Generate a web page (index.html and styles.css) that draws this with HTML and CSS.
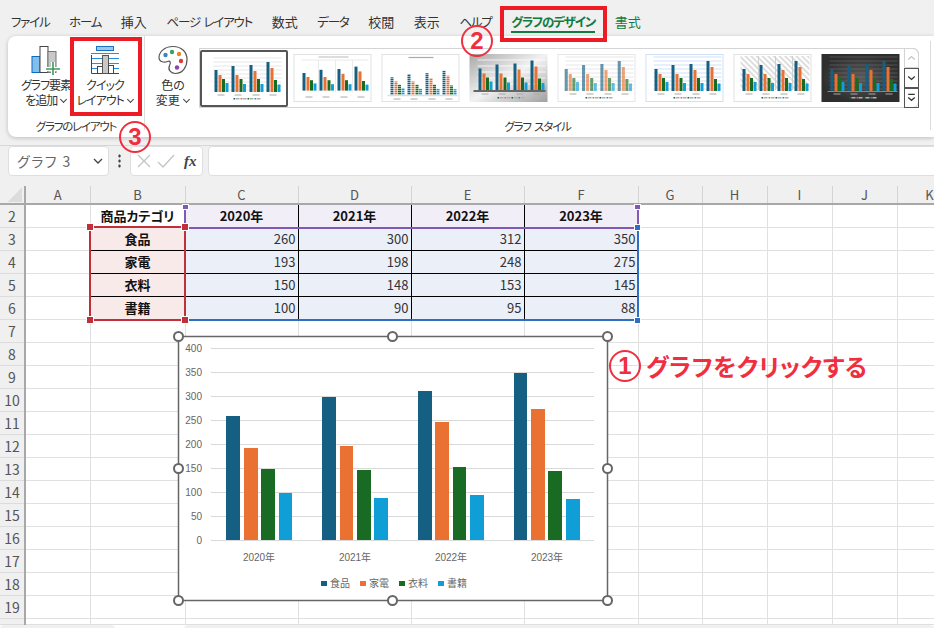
FILE: index.html
```html
<!DOCTYPE html>
<html lang="ja">
<head>
    <meta charset="UTF-8">
    <title>グラフのデザイン</title>
    <link rel="stylesheet" href="styles.css">
</head>
<body>
    <!-- shared parts of the little gallery charts -->
    <svg class="defs">
        <defs>
            <g id="mini-grid">
                <path d="M8 3H76M8 7H76M8 11H76M8 15H76M8 19H76M8 23H76M8 27H76M8 31H76M8 35H76" stroke="#dcdcdc" stroke-width="0.7"/>
            </g>
            <g id="mini-bars">
                <g fill="#156082">
                    <rect x="9" y="15" width="3" height="22"/><rect x="26" y="11" width="3" height="26"/>
                    <rect x="44" y="10" width="3" height="27"/><rect x="61" y="7" width="3" height="30"/>
                </g>
                <g fill="#e97132">
                    <rect x="13" y="20" width="3" height="17"/><rect x="30" y="20" width="3" height="17"/>
                    <rect x="48" y="16" width="3" height="21"/><rect x="65" y="13" width="3" height="24"/>
                </g>
                <g fill="#196b24">
                    <rect x="16.500" y="24" width="3" height="13"/><rect x="34" y="24" width="3" height="13"/>
                    <rect x="51.500" y="24" width="3" height="13"/><rect x="68.500" y="25" width="3" height="12"/>
                </g>
                <g fill="#0f9ed5">
                    <rect x="20" y="28" width="3" height="9"/><rect x="37.500" y="29" width="3" height="8"/>
                    <rect x="55" y="29" width="3" height="8"/><rect x="72" y="29.500" width="3" height="7.500"/>
                </g>
            </g>
            <g id="mini-foot">
                <path d="M12 40H19M29 40H36M47 40H54M64 40H71" stroke="#a8a8a8" stroke-width="1"/>
                <rect x="28" y="43" width="1.500" height="1.500" fill="#156082"/><rect x="30" y="43" width="4" height="1.500" fill="#b0b0b0"/>
                <rect x="35" y="43" width="1.500" height="1.500" fill="#e97132"/><rect x="37" y="43" width="4" height="1.500" fill="#b0b0b0"/>
                <rect x="42" y="43" width="1.500" height="1.500" fill="#196b24"/><rect x="44" y="43" width="4" height="1.500" fill="#b0b0b0"/>
                <rect x="49" y="43" width="1.500" height="1.500" fill="#0f9ed5"/><rect x="51" y="43" width="4" height="1.500" fill="#b0b0b0"/>
            </g>
            <pattern id="stripes" width="4" height="2" patternUnits="userSpaceOnUse">
                <rect width="4" height="1" fill="#fff" fill-opacity="0.55"/>
            </pattern>
            <pattern id="hatch" width="4" height="4" patternUnits="userSpaceOnUse" patternTransform="rotate(45)">
                <rect width="4" height="2" fill="#dedede"/>
            </pattern>
            <linearGradient id="silver" x1="0" y1="0" x2="1" y2="1">
                <stop offset="0" stop-color="#a8a8a8"/><stop offset="0.5" stop-color="#f2f2f2"/><stop offset="1" stop-color="#a0a0a0"/>
            </linearGradient>
            <radialGradient id="coal">
                <stop offset="0" stop-color="#5a5a5a"/><stop offset="1" stop-color="#2e2e2e"/>
            </radialGradient>
        </defs>
    </svg>

    <nav class="tabs">
        <span class="tab kana">ファイル</span>
        <span class="tab kana">ホーム</span>
        <span class="tab">挿入</span>
        <span class="tab kana">ページ レイアウト</span>
        <span class="tab">数式</span>
        <span class="tab kana">データ</span>
        <span class="tab">校閲</span>
        <span class="tab">表示</span>
        <span class="tab kana">ヘルプ</span>
        <span class="tab kana active">グラフのデザイン</span>
        <span class="tab context">書式</span>
    </nav>

    <section class="ribbon">
        <div class="group layout-group">
            <div class="group-body">
                <div class="big-btn add-btn">
                    <svg class="icon" viewBox="0 0 30 30">
                        <rect x="1" y="11.500" width="8" height="16" fill="#83beec" stroke="#0b6cbd"/>
                        <rect x="9" y="1.500" width="8" height="26" fill="#fff" stroke="#444"/>
                        <rect x="17" y="6.500" width="8" height="21" fill="#c8c8c8" stroke="#777"/>
                        <path d="M22 17V31M15 24H29" stroke="#fff" stroke-width="4"/>
                        <path d="M22 17V31M15 24H29" stroke="#3a9a5b" stroke-width="1.600"/>
                    </svg>
                    <span>グラフ要素<br>を追加 <i class="caret"></i></span>
                </div>
                <div class="big-btn quick-btn">
                    <svg class="icon" viewBox="0 0 30 30">
                        <rect x="6.500" y="1.500" width="17" height="4" fill="#9cc8ee" stroke="#1a73c2"/>
                        <path d="M1 8.500H29M1 13.500H29M1 18.500H29M1 23.500H29" stroke="#2a8fe0"/>
                        <path d="M1.500 10V28.500H29" fill="none" stroke="#444"/>
                        <rect x="7.500" y="21.500" width="5" height="7" fill="#fff" stroke="#444"/>
                        <rect x="12.500" y="10.500" width="6" height="18" fill="#c8c8c8" stroke="#555"/>
                        <rect x="18.500" y="20.500" width="5" height="8" fill="#fff" stroke="#444"/>
                    </svg>
                    <span>クイック<br>レイアウト <i class="caret"></i></span>
                </div>
            </div>
            <div class="group-label">グラフのレイアウト</div>
        </div>
        <div class="group style-group">
            <div class="group-body">
                <div class="big-btn color-btn">
                    <svg class="icon" viewBox="0 0 30 30">
                        <path d="M15 1.500C6 1.500 1 7.500 1 12.500C1 17.500 7 17.500 9.500 16.500C12.500 15.500 13 17.500 11.500 20.500C9.500 25 13 28.500 17.500 28.500C25 28.500 29 21.500 29 14.500C29 6.500 23 1.500 15 1.500Z" fill="#fff" stroke="#555" stroke-width="1.200"/>
                        <circle cx="7.500" cy="10" r="2.200" fill="#3b84c4"/>
                        <circle cx="14" cy="7" r="2.200" fill="#3aa35a"/>
                        <circle cx="21" cy="9" r="2.200" fill="#e8862a"/>
                        <circle cx="23" cy="16" r="2.200" fill="#e5383b"/>
                        <circle cx="19" cy="22.500" r="2.200" fill="#8e44ad"/>
                    </svg>
                    <span>色の<br>変更 <i class="caret"></i></span>
                </div>
                <div class="gallery">
                    <div class="thumb-selected">
                        <svg class="thumb" viewBox="0 0 78 48"><rect width="78" height="48" fill="#fff"/><use href="#mini-grid"/><use href="#mini-bars"/><use href="#mini-foot"/></svg>
                    </div>
                    <svg class="thumb" viewBox="0 0 78 48"><rect x="0.500" y="0.500" width="77" height="47" fill="#fff" stroke="#e2e2e2"/><path d="M8 6H75M25 6V38M42 6V38M59 6V38" stroke="#e4e4e4" stroke-width="0.800"/><path d="M25 3H55" stroke="#bbb" stroke-width="1"/><use href="#mini-bars" transform="translate(0 7) scale(1 0.8)"/><path d="M12 43H19M29 43H36M47 43H54M64 43H71" stroke="#a8a8a8"/></svg>
                    <svg class="thumb" viewBox="0 0 78 48"><rect x="0.500" y="0.500" width="77" height="47" fill="#fff" stroke="#e2e2e2"/><path d="M27 3.500H52" stroke="#aaa" stroke-width="1.200"/><use href="#mini-bars" transform="translate(0 11) scale(1 0.82)"/><rect x="8" y="8" width="68" height="33" fill="url(#stripes)"/><path d="M6 41.500H76" stroke="#ddd" stroke-width="1.500"/><path d="M12 45H19M29 45H36M47 45H54M64 45H71" stroke="#a8a8a8"/></svg>
                    <svg class="thumb" viewBox="0 0 78 48"><rect width="78" height="48" fill="url(#silver)"/><path d="M8 6H76M8 12H76M8 18H76M8 24H76M8 30H76" stroke="#fff" stroke-opacity="0.5" stroke-width="1.500"/><use href="#mini-bars" transform="translate(0 -0.500)"/><rect x="4" y="36" width="72" height="2" fill="#666"/><use href="#mini-foot"/></svg>
                    <svg class="thumb" viewBox="0 0 78 48"><rect x="0.500" y="0.500" width="77" height="47" fill="#fff" stroke="#e6e6e6"/><use href="#mini-grid"/><g transform="translate(-2 0) scale(1.020 1)"><use href="#mini-bars" opacity="0.650"/></g><use href="#mini-foot"/></svg>
                    <svg class="thumb" viewBox="0 0 78 48"><rect x="0.500" y="0.500" width="77" height="47" fill="#fff" stroke="#cfe2f5"/><path d="M8 3H76M8 7H76M8 11H76M8 15H76M8 19H76M8 23H76M8 27H76M8 31H76M8 35H76" stroke="#cfe2f5" stroke-width="1.200"/><use href="#mini-bars"/><use href="#mini-foot"/></svg>
                    <svg class="thumb" viewBox="0 0 78 48"><rect x="0.500" y="0.500" width="77" height="47" fill="#fff" stroke="#e2e2e2"/><rect x="7" y="2" width="69" height="34" fill="url(#hatch)"/><path d="M25 2V36M42 2V36M59 2V36" stroke="#d0d0d0"/><use href="#mini-bars"/><use href="#mini-foot"/></svg>
                    <svg class="thumb" viewBox="0 0 78 48"><rect width="78" height="48" fill="url(#coal)"/><path d="M8 3H76M8 7H76M8 11H76M8 15H76M8 19H76M8 23H76M8 27H76M8 31H76M8 35H76" stroke="#777" stroke-width="0.500"/><use href="#mini-bars"/><rect x="6" y="37" width="70" height="1" fill="#888"/><use href="#mini-foot"/></svg>
                    <div class="gallery-scroll">
                        <span class="scroll-btn off"><svg viewBox="0 0 14 19"><path d="M3.500 11L7 8L10.500 11" fill="none" stroke="#c4c4c4" stroke-width="1.400"/></svg></span>
                        <span class="scroll-btn"><svg viewBox="0 0 14 19"><path d="M3.500 8L7 11L10.500 8" fill="none" stroke="#333" stroke-width="1.400"/></svg></span>
                        <span class="scroll-btn"><svg viewBox="0 0 14 19"><path d="M3.500 5.500H10.500M3.500 9L7 12L10.500 9" fill="none" stroke="#333" stroke-width="1.400"/></svg></span>
                    </div>
                </div>
            </div>
            <div class="group-label">グラフ スタイル</div>
        </div>
    </section>

    <div class="formula-bar">
        <div class="name-box">グラフ 3<svg viewBox="0 0 10 6"><path d="M1 1L5 5L9 1" fill="none" stroke="#444" stroke-width="1.300"/></svg></div>
        <div class="bar-dots"></div>
        <div class="fx-box">
            <svg viewBox="0 0 40 16"><path d="M2 2L14 14M14 2L2 14M22 9L27 14L38 2" fill="none" stroke="#c4c4c4" stroke-width="1.300"/></svg>
            <em>fx</em>
        </div>
        <div class="formula-input"></div>
    </div>

    <div class="sheet">
        <table class="cells">
            <colgroup>
                <col class="c-row"><col class="c-a"><col class="c-b"><col class="c-n"><col class="c-n"><col class="c-n"><col class="c-f"><col class="c-g"><col class="c-h"><col class="c-h"><col class="c-h"><col class="c-k">
            </colgroup>
            <tr class="col-head"><th class="corner"></th><th>A</th><th>B</th><th>C</th><th>D</th><th>E</th><th>F</th><th>G</th><th>H</th><th>I</th><th>J</th><th>K</th></tr>
            <tr><th>2</th><td></td><td class="cat head">商品カテゴリ</td><td class="year">2020年</td><td class="year">2021年</td><td class="year">2022年</td><td class="year">2023年</td><td></td><td></td><td></td><td></td><td></td></tr>
            <tr><th>3</th><td></td><td class="cat">食品</td><td class="num">260</td><td class="num">300</td><td class="num">312</td><td class="num">350</td><td></td><td></td><td></td><td></td><td></td></tr>
            <tr><th>4</th><td></td><td class="cat">家電</td><td class="num">193</td><td class="num">198</td><td class="num">248</td><td class="num">275</td><td></td><td></td><td></td><td></td><td></td></tr>
            <tr><th>5</th><td></td><td class="cat">衣料</td><td class="num">150</td><td class="num">148</td><td class="num">153</td><td class="num">145</td><td></td><td></td><td></td><td></td><td></td></tr>
            <tr><th>6</th><td></td><td class="cat">書籍</td><td class="num">100</td><td class="num">90</td><td class="num">95</td><td class="num">88</td><td></td><td></td><td></td><td></td><td></td></tr>
            <tr><th>7</th><td></td><td></td><td></td><td></td><td></td><td></td><td></td><td></td><td></td><td></td><td></td></tr>
            <tr><th>8</th><td></td><td></td><td></td><td></td><td></td><td></td><td></td><td></td><td></td><td></td><td></td></tr>
            <tr><th>9</th><td></td><td></td><td></td><td></td><td></td><td></td><td></td><td></td><td></td><td></td><td></td></tr>
            <tr><th>10</th><td></td><td></td><td></td><td></td><td></td><td></td><td></td><td></td><td></td><td></td><td></td></tr>
            <tr><th>11</th><td></td><td></td><td></td><td></td><td></td><td></td><td></td><td></td><td></td><td></td><td></td></tr>
            <tr><th>12</th><td></td><td></td><td></td><td></td><td></td><td></td><td></td><td></td><td></td><td></td><td></td></tr>
            <tr><th>13</th><td></td><td></td><td></td><td></td><td></td><td></td><td></td><td></td><td></td><td></td><td></td></tr>
            <tr><th>14</th><td></td><td></td><td></td><td></td><td></td><td></td><td></td><td></td><td></td><td></td><td></td></tr>
            <tr><th>15</th><td></td><td></td><td></td><td></td><td></td><td></td><td></td><td></td><td></td><td></td><td></td></tr>
            <tr><th>16</th><td></td><td></td><td></td><td></td><td></td><td></td><td></td><td></td><td></td><td></td><td></td></tr>
            <tr><th>17</th><td></td><td></td><td></td><td></td><td></td><td></td><td></td><td></td><td></td><td></td><td></td></tr>
            <tr><th>18</th><td></td><td></td><td></td><td></td><td></td><td></td><td></td><td></td><td></td><td></td><td></td></tr>
            <tr><th>19</th><td></td><td></td><td></td><td></td><td></td><td></td><td></td><td></td><td></td><td></td><td></td></tr>
            <tr class="sliver"><th></th><td></td><td></td><td></td><td></td><td></td><td></td><td></td><td></td><td></td><td></td><td></td></tr>
        </table>

        <!-- data range highlights -->
        <div class="range range-year"><i class="grip g-tr"></i><i class="grip g-tl"></i></div>
        <div class="range range-val"><i class="grip g-tr"></i><i class="grip g-br"></i></div>
        <div class="range range-cat"><i class="grip g-tl"></i><i class="grip g-tr"></i><i class="grip g-bl"></i><i class="grip g-br"></i></div>

        <!-- chart, viewBox uses page coordinates -->
        <svg class="chart" viewBox="170 328 448 282">
            <rect class="chart-frame" x="178.500" y="336.500" width="429" height="264"/>
            <path class="gridline" d="M211 348.500H594M211 372.500H594M211 396.500H594M211 420.500H594M211 444.500H594M211 468.500H594M211 492.500H594M211 516.500H594M211 540.500H594"/>
            <g class="axis-y">
                <text x="202" y="352">400</text><text x="202" y="376">350</text><text x="202" y="400">300</text>
                <text x="202" y="424">250</text><text x="202" y="448">200</text><text x="202" y="472">150</text>
                <text x="202" y="496">100</text><text x="202" y="520">50</text><text x="202" y="544">0</text>
            </g>
            <g class="s-food">
                <rect x="226" y="416" width="14" height="124"/><rect x="322" y="397" width="14" height="143"/>
                <rect x="418" y="391" width="14" height="149"/><rect x="514" y="373" width="13" height="167"/>
            </g>
            <g class="s-elec">
                <rect x="244" y="448" width="14" height="92"/><rect x="340" y="446" width="13" height="94"/>
                <rect x="435" y="422" width="14" height="118"/><rect x="531" y="409" width="14" height="131"/>
            </g>
            <g class="s-wear">
                <rect x="261" y="469" width="14" height="71"/><rect x="357" y="470" width="14" height="70"/>
                <rect x="453" y="467" width="13" height="73"/><rect x="548" y="471" width="14" height="69"/>
            </g>
            <g class="s-book">
                <rect x="279" y="493" width="13" height="47"/><rect x="374" y="498" width="14" height="42"/>
                <rect x="470" y="495" width="14" height="45"/><rect x="566" y="499" width="14" height="41"/>
            </g>
            <g class="axis-x">
                <text x="259" y="561">2020年</text><text x="355" y="561">2021年</text>
                <text x="451" y="561">2022年</text><text x="547" y="561">2023年</text>
            </g>
            <rect class="s-food" x="321" y="581" width="6" height="5"/><text class="legend" x="330" y="587">食品</text>
            <rect class="s-elec" x="360" y="581" width="6" height="5"/><text class="legend" x="369" y="587">家電</text>
            <rect class="s-wear" x="399" y="581" width="6" height="5"/><text class="legend" x="408" y="587">衣料</text>
            <rect class="s-book" x="438" y="581" width="6" height="5"/><text class="legend" x="447" y="587">書籍</text>
            <g class="chart-grip">
                <circle cx="178.500" cy="336.500" r="4.500"/><circle cx="392.500" cy="336.500" r="4.500"/><circle cx="607.500" cy="336.500" r="4.500"/>
                <circle cx="178.500" cy="468.500" r="4.500"/><circle cx="607.500" cy="468.500" r="4.500"/>
                <circle cx="178.500" cy="600.500" r="4.500"/><circle cx="392.500" cy="600.500" r="4.500"/><circle cx="607.500" cy="600.500" r="4.500"/>
            </g>
        </svg>
    </div>

    <footer class="sheet-tabs"><span class="sheet-pill first"></span><span class="sheet-pill second"></span></footer>

    <!-- callouts drawn on top of the screenshot -->
    <div class="mark mark-tab"></div>
    <div class="mark mark-quick"></div>
    <div class="num-badge badge-2">2</div>
    <div class="num-badge badge-3">3</div>
    <div class="callout"><span class="num-badge">1</span><span>グラフをクリックする</span></div>
</body>
</html>
```

FILE: styles.css
```css
*{
    margin: 0;
    padding: 0;
    box-sizing: border-box;
}

body{
    position: relative;
    width: 934px;
    height: 628px;
    overflow: hidden;
    background-color: #f0f0f0;
    color: #333;
    font-family: "Noto Sans CJK JP", "Noto Sans", sans-serif;
    font-size: 12px;
    font-feature-settings: "palt";
}

.defs{
    position: absolute;
    width: 0;
    height: 0;
}

/* tabs */
.tabs{
    display: flex;
    gap: 19.600px;
    height: 36px;
    padding: 13px 0 0 11px;
    font-size: 13px;
    line-height: 18px;
}

.tab.kana{
    font-size: 12.500px;
    letter-spacing: -1.200px;
    word-spacing: 2px;
}

.tab.active{
    height: 20px;
    border-bottom: 2px solid #107c41;
    color: #107c41;
    font-weight: 700;
}

.tab.context{
    color: #107c41;
}

/* ribbon */
.ribbon{
    display: flex;
    height: 101px;
    margin-left: 8px;
    background-color: #fff;
    border-radius: 8px 0 0 8px;
    box-shadow: 0 1px 4px rgba(0, 0, 0, 0.22);
}

.group{
    display: flex;
    flex-direction: column;
}

.group-body{
    display: flex;
    flex: none;
    height: 82px;
}

.group-label{
    flex: none;
    text-align: center;
    font-size: 11.500px;
    letter-spacing: -1.200px;
    word-spacing: 2px;
    line-height: 16px;
    color: #333;
}

.layout-group{
    width: 137px;
    border-right: 1px solid #dcdcdc;
    margin-bottom: 7px;
}

.style-group{
    width: 786px;
    border-right: 1px solid #dcdcdc;
    margin: 5px 0 7px;
}

.style-group .group-body{
    height: 77px;
}

.layout-group .group-body{
    padding-top: 9px;
}

.big-btn{
    display: flex;
    flex-direction: column;
    align-items: center;
    text-align: center;
    line-height: 15px;
    letter-spacing: -1px;
    white-space: nowrap;
}

.big-btn .icon{
    width: 30px;
    height: 30px;
    margin-bottom: 2px;
}

.add-btn{
    width: 60px;
    margin-left: 8px;
}

.quick-btn{
    width: 58px;
}

.color-btn{
    width: 46px;
    margin-left: 5px;
    padding-top: 4px;
    letter-spacing: 0;
}

.caret{
    display: inline-block;
    width: 5px;
    height: 5px;
    margin: 0 1px 3px 2px;
    border-right: 1px solid #444;
    border-bottom: 1px solid #444;
    transform: rotate(45deg);
}

/* chart style gallery */
.gallery{
    display: flex;
    align-items: center;
    gap: 9px;
    position: relative;
    width: 720px;
    height: 60px;
    margin: 7px 0 0 3px;
    border: 1px solid #d4d4d4;
    border-radius: 0 6px 6px 0;
}

.thumb{
    display: block;
    flex: none;
    width: 79px;
    height: 48px;
}

.thumb-selected{
    flex: none;
    width: 88px;
    height: 57px;
    margin-right: -4px;
    padding: 3px 3px;
    border: 2px solid #555;
    border-radius: 2px;
}

.gallery-scroll{
    position: absolute;
    top: -1px;
    right: -1px;
    display: flex;
    flex-direction: column;
    width: 15px;
    height: 60px;
}

.scroll-btn{
    flex: 1;
    border: 1px solid #555;
}

.scroll-btn.off{
    border-color: #d4d4d4;
    border-radius: 0 6px 0 0;
}

.scroll-btn svg{
    display: block;
    width: 100%;
    height: 100%;
}

/* formula bar */
.formula-bar{
    display: flex;
    align-items: stretch;
    height: 31px;
    margin-top: 8px;
    padding: 1px 0 0 8px;
    background: linear-gradient(#d8d8d8 1px, transparent 1px);
}

.name-box, .fx-box, .formula-input{
    background-color: #fff;
    border: 1px solid #dedede;
    border-radius: 4px;
}

.name-box{
    display: flex;
    align-items: center;
    justify-content: space-between;
    width: 101px;
    padding: 0 5px 0 8px;
    font-size: 14px;
    letter-spacing: 1.500px;
    color: #666;
}

.name-box svg{
    width: 10px;
    height: 6px;
}

.bar-dots{
    width: 21px;
    background: radial-gradient(circle, #444 1px, transparent 1.500px) center / 3px 5px repeat-y;
    background-size: 3px 5px;
    margin: 8px 0 8px;
}

.fx-box{
    display: flex;
    align-items: center;
    gap: 8px;
    width: 73px;
    padding-left: 5px;
}

.fx-box svg{
    width: 40px;
    height: 16px;
}

.fx-box em{
    font-family: "Liberation Serif", serif;
    font-size: 15px;
    font-weight: 700;
    color: #444;
}

.formula-input{
    flex: 1;
    margin: 0 -10px 0 5px;
    border-radius: 4px 0 0 4px;
}

/* sheet */
.sheet{
    position: relative;
    margin-top: 10px;
}

.cells{
    border-collapse: collapse;
    table-layout: fixed;
    width: 962px;
    background-color: #fff;
}

.c-row{ width: 25px; }
.c-a{ width: 65px; }
.c-b{ width: 95px; }
.c-n{ width: 113px; }
.c-f{ width: 114px; }
.c-g{ width: 64px; }
.c-h{ width: 65px; }
.c-k{ width: 65px; }

.cells tr{
    height: 23px;
}

.cells td{
    border: 1px solid #e0e0e0;
    padding: 0 2px;
    line-height: 1;
    font-size: 13px;
    color: #222;
}

.cells th{
    background-color: #f0f0f0;
    border-right: 2px solid #a8a8a8;
    border-bottom: 1px solid #dcdcdc;
    font-size: 14px;
    font-weight: 400;
    line-height: 1;
    color: #555;
}

.cells tr.col-head{
    height: 18px;
}

.cells tr.sliver{
    height: 6px;
}

.col-head th{
    border-right: 1px solid #d4d4d4;
    border-bottom: 2px solid #a8a8a8;
    font-size: 13px;
}

.col-head th.corner{
    border-right: 2px solid #a8a8a8;
    background: linear-gradient(135deg, transparent 50%, #dcdcdc 50%) 8px 2px / 14px 14px no-repeat #f0f0f0;
}

.cells td.cat{
    background-color: #f9eaea;
    border: 1px solid #000;
    text-align: center;
    font-weight: 700;
    color: #111;
}

.cells td.head{
    background-color: #fff;
}

.cells td.year{
    background-color: #f1eef8;
    border: 1px solid #000;
    text-align: center;
    font-weight: 700;
    color: #111;
}

.cells td.num{
    background-color: #ebeff8;
    border: 1px solid #000;
    text-align: right;
    color: #333;
}

/* highlighted ranges */
.range{
    position: absolute;
}

.range-cat{
    left: 89px;
    top: 40px;
    width: 97px;
    height: 95px;
    border: 2px solid #c0303a;
}

.range-year{
    left: 184px;
    top: 19px;
    width: 455px;
    height: 24px;
    border-left: 2px solid #7f58b8;
    border-right: 2px solid #7f58b8;
    border-bottom: 2px solid #7f58b8;
}

.range-val{
    left: 186px;
    top: 43px;
    width: 453px;
    height: 92px;
    border-right: 2px solid #2e6fc4;
    border-bottom: 2px solid #2e6fc4;
}

.grip{
    position: absolute;
    width: 6px;
    height: 6px;
    background-color: #c0303a;
    outline: 1px solid #fff;
}

.g-tl{ left: -4px; top: -4px; }
.g-tr{ right: -4px; top: -4px; }
.g-bl{ left: -4px; bottom: -4px; }
.g-br{ right: -4px; bottom: -4px; }

.range-year .grip{
    background-color: #7f58b8;
    width: 5px;
    height: 4px;
    top: 0;
}

.range-year .g-tr{
    right: -3px;
}

.range-year .g-tl{
    left: -3px;
}

.range-val .grip{
    background-color: #2e6fc4;
    width: 5px;
    height: 5px;
    right: -3px;
}

/* chart */
.chart{
    position: absolute;
    left: 170px;
    top: 142px;
    width: 448px;
    height: 282px;
    overflow: visible;
}

.chart-frame{
    fill: #fff;
    stroke: #666;
    stroke-width: 1.500;
}

.gridline{
    stroke: #d9d9d9;
    fill: none;
}

.axis-y text, .axis-x text, .legend{
    font-family: "Liberation Sans", "Noto Sans CJK JP", sans-serif;
    font-size: 10px;
    fill: #666;
}

.axis-y text{
    text-anchor: end;
}

.axis-x text{
    text-anchor: middle;
}

.s-food{ fill: #156082; }
.s-elec{ fill: #e97132; }
.s-wear{ fill: #196b24; }
.s-book{ fill: #0f9ed5; }

.chart-grip circle{
    fill: #fff;
    stroke: #666;
    stroke-width: 2;
}

/* sheet tabs strip */
.sheet-tabs{
    display: flex;
    height: 4px;
    background-color: #fff;
}

.sheet-pill{
    background-color: #f0f0f0;
    border-radius: 5px 5px 0 0;
}

.sheet-pill.first{
    width: 115px;
}

.sheet-pill.second{
    flex: 1;
    margin-left: 69px;
}

/* red callouts */
.mark{
    position: absolute;
    border: 4px solid #ed1c24;
}

.mark-tab{
    left: 500px;
    top: 6px;
    width: 107px;
    height: 36px;
}

.mark-quick{
    left: 70px;
    top: 37px;
    width: 72px;
    height: 79px;
}

.num-badge{
    display: flex;
    align-items: center;
    justify-content: center;
    width: 32px;
    height: 32px;
    flex: none;
    border: 2px solid #ef2f3f;
    border-radius: 50%;
    font-family: "Liberation Sans", sans-serif;
    font-size: 24px;
    letter-spacing: 0;
    font-weight: 700;
    color: #ef2f3f;
}

.badge-2{
    position: absolute;
    left: 461px;
    top: 25px;
}

.badge-3{
    position: absolute;
    left: 119px;
    top: 121px;
}

.callout{
    position: absolute;
    left: 609px;
    top: 350px;
    display: flex;
    align-items: center;
    gap: 5px;
    font-size: 24px;
    letter-spacing: 0.500px;
    line-height: 32px;
    font-weight: 700;
    color: #ef2f3f;
}
```
